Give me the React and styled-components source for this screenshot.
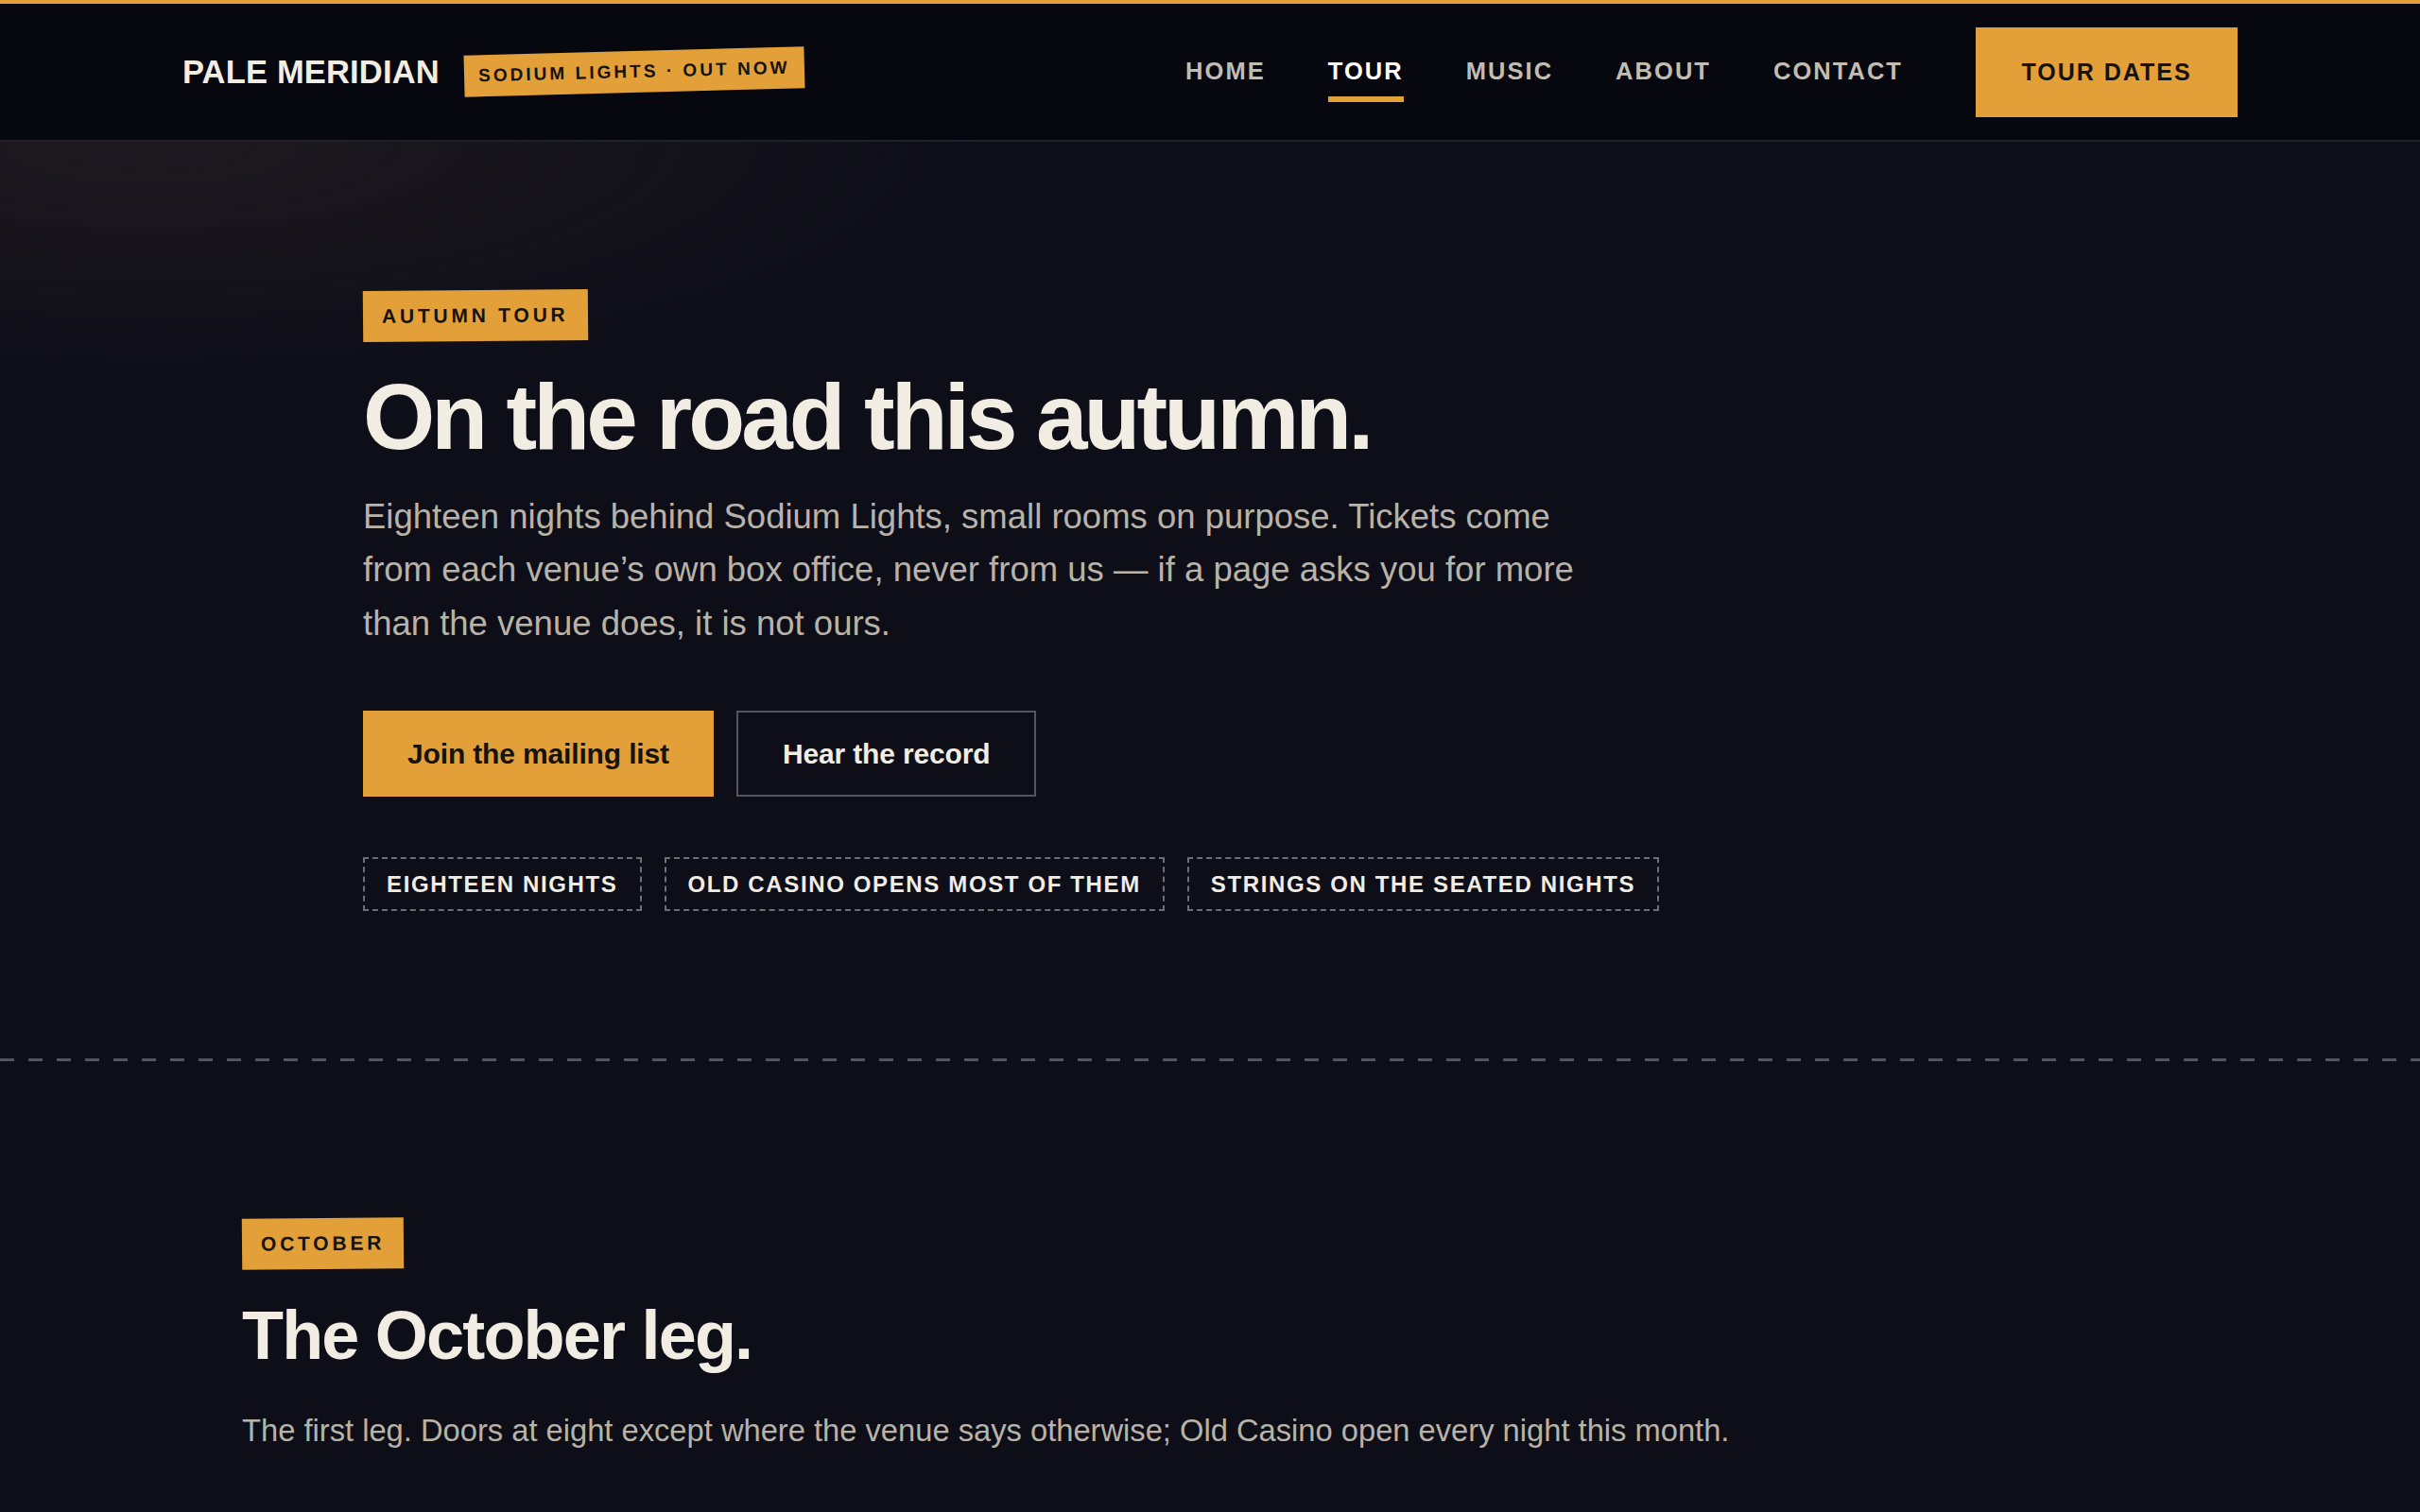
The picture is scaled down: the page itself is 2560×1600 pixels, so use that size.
import React from "react";
import styled, { createGlobalStyle } from "styled-components";

const GlobalStyle = createGlobalStyle`
  html, body {
    margin: 0;
    padding: 0;
    background: #0e0e19;
  }

  * {
    box-sizing: border-box;
  }

  body {
    font-family: "Liberation Sans", Arial, sans-serif;
    color: #f1ede3;
  }
`;

const Page = styled.div`
  min-height: 100vh;
  background: #0e0e19;
`;

const Header = styled.header`
  height: 150px;
  display: flex;
  align-items: center;
  justify-content: space-between;
  padding: 0 193px;
  background: #07070f;
  border-top: 4px solid #e3a038;
  border-bottom: 2px solid #20202a;
`;

const Brand = styled.div`
  display: flex;
  align-items: center;
  gap: 26px;
`;

const Logo = styled.span`
  font-size: 34.5px;
  font-weight: 700;
  color: #f1ede3;
  letter-spacing: 0.005em;
`;

const Sticker = styled.span`
  display: inline-flex;
  align-items: center;
  height: 44px;
  padding: 0 15px;
  background: #e3a038;
  color: #16120c;
  font-size: 19px;
  font-weight: 700;
  letter-spacing: 0.16em;
  transform: rotate(-1.5deg);
`;

const Nav = styled.nav`
  display: flex;
  align-items: center;
`;

const NavLinks = styled.div`
  display: flex;
  align-items: center;
  gap: 66px;
  margin-right: 77px;
`;

const NavLink = styled.a`
  position: relative;
  font-size: 25.5px;
  line-height: 1;
  font-weight: 700;
  letter-spacing: 0.08em;
  color: ${(p) => (p.$active ? "#ffffff" : "#c2bdb2")};
  text-decoration: none;

  &::after {
    content: "";
    display: ${(p) => (p.$active ? "block" : "none")};
    position: absolute;
    left: 0;
    right: 0;
    top: calc(100% + 13px);
    height: 6px;
    background: #e3a038;
  }
`;

const CtaButton = styled.a`
  display: inline-flex;
  align-items: center;
  justify-content: center;
  height: 95px;
  width: 277px;
  background: #e3a038;
  color: #16120c;
  font-size: 25px;
  font-weight: 700;
  letter-spacing: 0.08em;
  text-decoration: none;
`;

const Hero = styled.section`
  padding: 157px 384px 156px;
  background: radial-gradient(
      ellipse 900px 260px at 160px 0,
      rgba(48, 38, 36, 0.45),
      rgba(48, 38, 36, 0) 100%
    ),
    #0e0e19;
`;

const Tag = styled.span`
  display: inline-flex;
  align-items: center;
  height: 54px;
  padding: 0 20px;
  background: #e3a038;
  color: #16120c;
  font-size: 21px;
  font-weight: 700;
  letter-spacing: 0.18em;
  transform: rotate(${(p) => p.$tilt || 0}deg);
`;

const Title = styled.h1`
  margin: 29px 0 0;
  font-size: 98px;
  line-height: 1.05;
  font-weight: 700;
  letter-spacing: -0.04em;
  color: #f1ede3;
`;

const Lead = styled.p`
  margin: 26px 0 0;
  max-width: 1300px;
  font-size: 36.5px;
  line-height: 56.5px;
  color: #b8b3a8;
`;

const Actions = styled.div`
  display: flex;
  gap: 24px;
  margin-top: 64px;
`;

const Button = styled.a`
  display: inline-flex;
  align-items: center;
  justify-content: center;
  height: 91px;
  padding: 0 ${(p) => (p.$primary ? 45 : 47)}px;
  font-size: 30px;
  font-weight: 700;
  letter-spacing: -0.005em;
  text-decoration: none;
  background: ${(p) => (p.$primary ? "#e3a038" : "transparent")};
  color: ${(p) => (p.$primary ? "#16120c" : "#f1ede3")};
  border: 2px solid ${(p) => (p.$primary ? "#e3a038" : "#55555f")};
`;

const Chips = styled.ul`
  display: flex;
  gap: 24px;
  margin: 64px 0 0;
  padding: 0;
  list-style: none;
`;

const Chip = styled.li`
  display: inline-flex;
  align-items: center;
  height: 57px;
  padding: 0 23px;
  border: 2px dashed #6e6e7a;
  font-size: 24px;
  font-weight: 700;
  letter-spacing: 0.068em;
  color: #f1ede3;
`;

const Divider = styled.hr`
  margin: 0;
  height: 3px;
  border: 0;
  background: repeating-linear-gradient(
    90deg,
    #55555f 0 15px,
    transparent 15px 30px
  );
`;

const Leg = styled.section`
  padding: 166px 256px 120px;
`;

const LegTitle = styled.h2`
  margin: 33px 0 0;
  font-size: 72px;
  line-height: 1.05;
  font-weight: 700;
  letter-spacing: -0.025em;
  color: #f1ede3;
`;

const LegText = styled.p`
  margin: 36px 0 0;
  font-size: 32.7px;
  line-height: 1.6;
  color: #b8b3a8;
`;

const navItems = ["HOME", "TOUR", "MUSIC", "ABOUT", "CONTACT"];
const chips = [
  "EIGHTEEN NIGHTS",
  "OLD CASINO OPENS MOST OF THEM",
  "STRINGS ON THE SEATED NIGHTS",
];

const App = () => {
  return (
    <Page>
      <GlobalStyle />
      <Header>
        <Brand>
          <Logo>PALE MERIDIAN</Logo>
          <Sticker>SODIUM LIGHTS · OUT NOW</Sticker>
        </Brand>
        <Nav>
          <NavLinks>
            {navItems.map((item) => (
              <NavLink key={item} href="#" $active={item === "TOUR"}>
                {item}
              </NavLink>
            ))}
          </NavLinks>
          <CtaButton href="#">TOUR DATES</CtaButton>
        </Nav>
      </Header>

      <Hero>
        <Tag $tilt={-0.5}>AUTUMN TOUR</Tag>
        <Title>On the road this autumn.</Title>
        <Lead>
          Eighteen nights behind Sodium Lights, small rooms on purpose. Tickets come from each
          venue’s own box office, never from us — if a page asks you for more than the venue
          does, it is not ours.
        </Lead>
        <Actions>
          <Button href="#" $primary>
            Join the mailing list
          </Button>
          <Button href="#">Hear the record</Button>
        </Actions>
        <Chips>
          {chips.map((chip) => (
            <Chip key={chip}>{chip}</Chip>
          ))}
        </Chips>
      </Hero>

      <Divider />

      <Leg>
        <Tag $tilt={-0.5}>OCTOBER</Tag>
        <LegTitle>The October leg.</LegTitle>
        <LegText>
          The first leg. Doors at eight except where the venue says otherwise; Old Casino open
          every night this month.
        </LegText>
      </Leg>
    </Page>
  );
};

export default App;
